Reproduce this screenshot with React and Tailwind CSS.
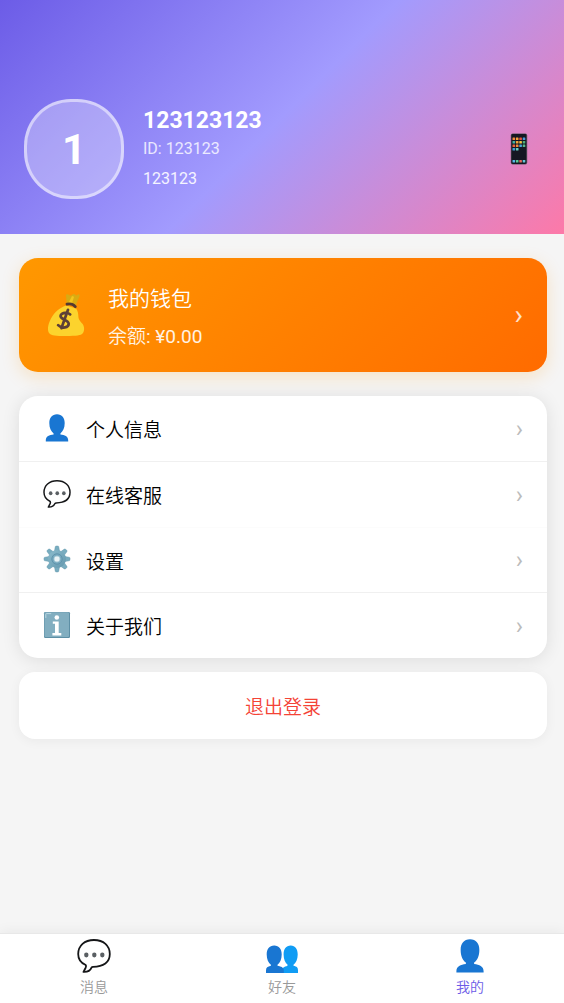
import React from 'react';

function BustIcon({ className }) {
  return (
    <svg viewBox="0 0 28 28" className={className} aria-hidden="true">
      <path
        fill="#1976d2"
        d="M14 0.300c-5 0-7.700 3.600-7.700 8.700 0 4.900 1.700 8.400 4.300 10.400v1.200c-4.300.6-7.800 1.700-7.800 6v.9h22.400v-.9c0-4.300-3.500-5.400-7.800-6v-1.200c2.600-2 4.300-5.500 4.300-10.400 0-5.100-2.700-8.700-7.700-8.700z"
      />
    </svg>
  );
}

function FriendsIcon({ className }) {
  return (
    <svg viewBox="0 0 34 34" className={className} aria-hidden="true">
      <path
        fill="#109cf4"
        d="M25.700 6.500c-4.700 0-7.100 3.700-7.100 9 0 4.800 1.600 8.300 4 10.200l-.3 1.300c-3 .6-5.300 1.600-5.300 4.500V34h16v-2.500c0-2.900-1-3.900-4.500-4.700v-1.100c2.500-1.900 4.200-5.400 4.200-10.200 0-5.300-2.400-9-7-9z"
      />
      <path
        fill="#1976d2"
        d="M9.200 6.500c-4.900 0-7.500 3.700-7.500 9 0 4.800 1.700 8.300 4.200 10.200v1.100C2.500 27.600 1 28.600 1 31.500V34h17.800v-2.500c0-2.900-2.300-3.900-6.300-4.700v-1.100c2.500-1.900 4.200-5.400 4.200-10.200 0-5.300-2.600-9-7.500-9z"
      />
    </svg>
  );
}

function ChatIcon({ className }) {
  return (
    <svg viewBox="0 0 34 34" className={className} aria-hidden="true">
      <path
        fill="#fff"
        stroke="#151618"
        strokeWidth="1.800"
        strokeLinejoin="round"
        d="M17 1C7.500 1 1.200 6.600 1.200 15c0 5 2.800 8.800 7.100 10.800.9.500.9 1.700.2 3.200l-2 3.900c3.700.2 6.900-1.600 8-4.300.3-.6.8-.8 1.500-.8 10.500 0 16.800-4.500 16.800-12.800C32.800 6.600 26.500 1 17 1z"
      />
      <ellipse cx="9.300" cy="16" rx="2.200" ry="2.400" fill="#5a5f63" />
      <ellipse cx="17.300" cy="16" rx="2.200" ry="2.400" fill="#5a5f63" />
      <ellipse cx="25.300" cy="16" rx="2.200" ry="2.400" fill="#5a5f63" />
    </svg>
  );
}

function GearIcon({ className }) {
  const teeth = [0, 45, 90, 135, 180, 225, 270, 315];
  return (
    <svg viewBox="0 0 28 28" className={className} aria-hidden="true">
      <defs>
        <linearGradient id="gear-face" x1="0" y1="0" x2="1" y2="1">
          <stop offset="0" stopColor="#8cbccd" />
          <stop offset="1" stopColor="#6397ad" />
        </linearGradient>
      </defs>
      {teeth.map((angle) => (
        <path
          key={angle}
          d="M11.500 6l.7-4.200q.2-.8 1-.8h1.600q.8 0 1 .8l.7 4.200z"
          fill="#79adc0"
          stroke="#5f94a9"
          strokeWidth=".4"
          transform={`rotate(${angle} 14 14)`}
        />
      ))}
      <circle cx="14" cy="14" r="9" fill="url(#gear-face)" />
      <circle cx="14" cy="14" r="5.200" fill="#78aabf" stroke="#5b8fa8" strokeWidth=".8" />
      <circle cx="14" cy="14" r="3" fill="#e9f2f5" stroke="#a9ccd8" strokeWidth=".8" />
    </svg>
  );
}

function InfoIcon({ className }) {
  return (
    <svg viewBox="0 0 28 28" className={className} aria-hidden="true">
      <rect x="1" y="1" width="26" height="26" rx="1.200" fill="#5d8fa5" />
      <rect x="1.500" y="1.200" width="24.500" height="24.800" rx="1" fill="#82aec0" />
      <path d="M2.800 6.500V3.300q0-.7.700-.7h4.300" fill="none" stroke="#b9d8e2" strokeWidth="1" strokeLinecap="round" />
      <circle cx="13.800" cy="6.500" r="2.300" fill="#fff" />
      <path d="M9.800 10.500h5.900v11.600h2.600v2.300H9.400v-2.300H12v-9.300H9.800z" fill="#fff" />
    </svg>
  );
}

function MoneyBagIcon({ className }) {
  return (
    <svg viewBox="0 0 40 44" className={className} aria-hidden="true">
      <path
        fill="#d9ab13"
        d="M19.700 10.500L19 2.800c-.2-1.400.9-1.900 2-1.300l2.700 1.300 2.200-1.500c.8-.5 1.700-.4 2.200.3l1.100 1 2-1.200c1.200-.3 1.800.8 1.300 1.900L28.500 13z"
      />
      <path fill="#f5c51c" d="M21.500 10L25 3l2 .8L24.800 11z" />
      <path
        fill="#fcd32d"
        d="M19.500 12.500C13 14.500 7.500 19 4 25.500.5 32 0 38 2.500 40.500c2 2.200 6 2.500 16.500 2.500s15-.4 16.800-2.700c2-2.800 1.700-7-.6-9.800-1.300-1.600-2.700-2.500-3.500-5-.6-2.400.1-6.500-2.700-10z"
      />
      <path d="M20 11.200c3-.8 6.200.1 8.300 2.500" fill="none" stroke="#543930" strokeWidth="2.800" strokeLinecap="round" />
      <path
        fill="none"
        stroke="#5c4037"
        strokeWidth="2.700"
        strokeLinecap="round"
        d="M23.200 21.400c-2.600-2.300-8-2.300-9.500.9-1.800 4 8 4.500 8 8.500 0 4-6.700 5.300-10.600 1.300M21 16.800l-6.600 18.400"
      />
    </svg>
  );
}

function PhoneIcon({ className }) {
  const colors = ['#f28b3c', '#f6a13a', '#e8523f', '#4a9bdc', '#45b3a3', '#f2a43a', '#f5c542', '#4fb07a', '#e8643f', '#f08c3a', '#4aa3e0', '#58b98b', '#3f9fd8', '#6bd0c0'];
  return (
    <svg viewBox="0 0 18 32" className={className} aria-hidden="true">
      <rect x=".8" y=".5" width="16.400" height="31" rx="1.900" fill="#5b5560" />
      <rect x="1.400" y="1" width="15" height="30" rx="1.400" fill="#151722" />
      {colors.map((color, i) => (
        <rect key={i} x={2.5 + (i % 4) * 3.4} y={4.5 + Math.floor(i / 4) * 3.5} width="2.600" height="2.400" rx=".5" fill={color} />
      ))}
      {['#57b9e8', '#5acb9a', '#e9695c', '#65c8d8'].map((color, i) => (
        <rect key={color} x={2.5 + i * 3.4} y="27" width="2.600" height="2.400" rx=".5" fill={color} />
      ))}
    </svg>
  );
}

const menu = [
  { label: '个人信息', Icon: BustIcon, row: 'h-[66px] border-b border-[#f0f0f0]' },
  { label: '在线客服', Icon: ChatIcon, row: 'h-[66px] border-b border-[#fcfcfc]' },
  { label: '设置', Icon: GearIcon, row: 'h-[65px] border-b border-[#f0f0f0]' },
  { label: '关于我们', Icon: InfoIcon, row: 'h-[65px]' },
];

const tabs = [
  { label: '消息', Icon: ChatIcon },
  { label: '好友', Icon: FriendsIcon },
  { label: '我的', Icon: BustIcon, active: true },
];

export default function App() {
  return (
    <div className="flex min-h-screen flex-col bg-[#f5f5f5] font-[Roboto,'Noto_Sans_CJK_SC',sans-serif] text-black">
      <header className="flex items-center bg-[linear-gradient(135deg,#6c5ce7_0%,#a29bfe_50%,#fd79a8_100%)] px-6 pt-[99px] pb-[35px] text-white">
        <div className="flex size-[100px] shrink-0 items-center justify-center rounded-[47px] border-3 border-white/50 bg-white/30 text-[42px] font-bold">
          1
        </div>
        <div className="ml-[19px] min-w-0 flex-1 pt-1">
          <h1 className="text-[23px] leading-7 font-bold">123123123</h1>
          <p className="text-base leading-7 text-white/80">ID: 123123</p>
          <p className="text-base leading-8 text-white/90">123123</p>
        </div>
        <button type="button" aria-label="手机" className="mr-3">
          <PhoneIcon className="h-8 w-[18px]" />
        </button>
      </header>

      <main className="flex-1 py-6 pr-[17px] pl-[19px]">
        <button
          type="button"
          className="flex h-[114px] w-full items-center rounded-[19px] bg-[linear-gradient(135deg,#ff9800,#ff6b00)] px-6 text-left text-white shadow-[0_5px_18px_rgba(255,152,0,0.2)]"
        >
          <MoneyBagIcon className="ml-1 h-11 w-10 shrink-0" />
          <span className="ml-[21px] flex-1 pt-1 font-[350]">
            <span className="block text-[21px] leading-10">我的钱包</span>
            <span className="block text-[19px] leading-9 text-white/90">
              余额<span className="font-normal">: ¥0.00</span>
            </span>
          </span>
          <span className="text-[28px] leading-8 text-white/80">›</span>
        </button>

        <div className="mt-6 overflow-hidden rounded-[19px] bg-white shadow-[0_2px_18px_rgba(0,0,0,0.1)]">
          {menu.map(({ label, Icon, row }) => (
            <button key={label} type="button" className={`flex w-full items-center px-6 text-left ${row}`}>
              <Icon className="mb-[2px] size-7 shrink-0" />
              <span className="ml-[15px] flex-1 pt-[6px] text-[19px] font-[350]">{label}</span>
              <span className="text-2xl leading-8 text-[#bbb]">›</span>
            </button>
          ))}
        </div>

        <button
          type="button"
          className="mt-[14px] h-[67px] w-full rounded-2xl bg-white pt-[6px] text-[19px] font-[350] text-[#f44336] shadow-[0_2px_12px_rgba(0,0,0,0.05)]"
        >
          退出登录
        </button>
      </main>

      <nav className="sticky bottom-0 grid h-[70px] grid-cols-3 border-t border-[#e8e8e8] bg-white shadow-[0_-2px_12px_rgba(0,0,0,0.05)]">
        {tabs.map(({ label, Icon, active }) => (
          <a
            key={label}
            href="#"
            aria-current={active ? 'page' : undefined}
            className={`flex flex-col items-center gap-1 pt-[5px] text-sm leading-5 font-[350] ${active ? 'text-[#6c5ce7]' : 'text-[#999]'}`}
          >
            <Icon className="size-[34px]" />
            {label}
          </a>
        ))}
      </nav>
    </div>
  );
}
